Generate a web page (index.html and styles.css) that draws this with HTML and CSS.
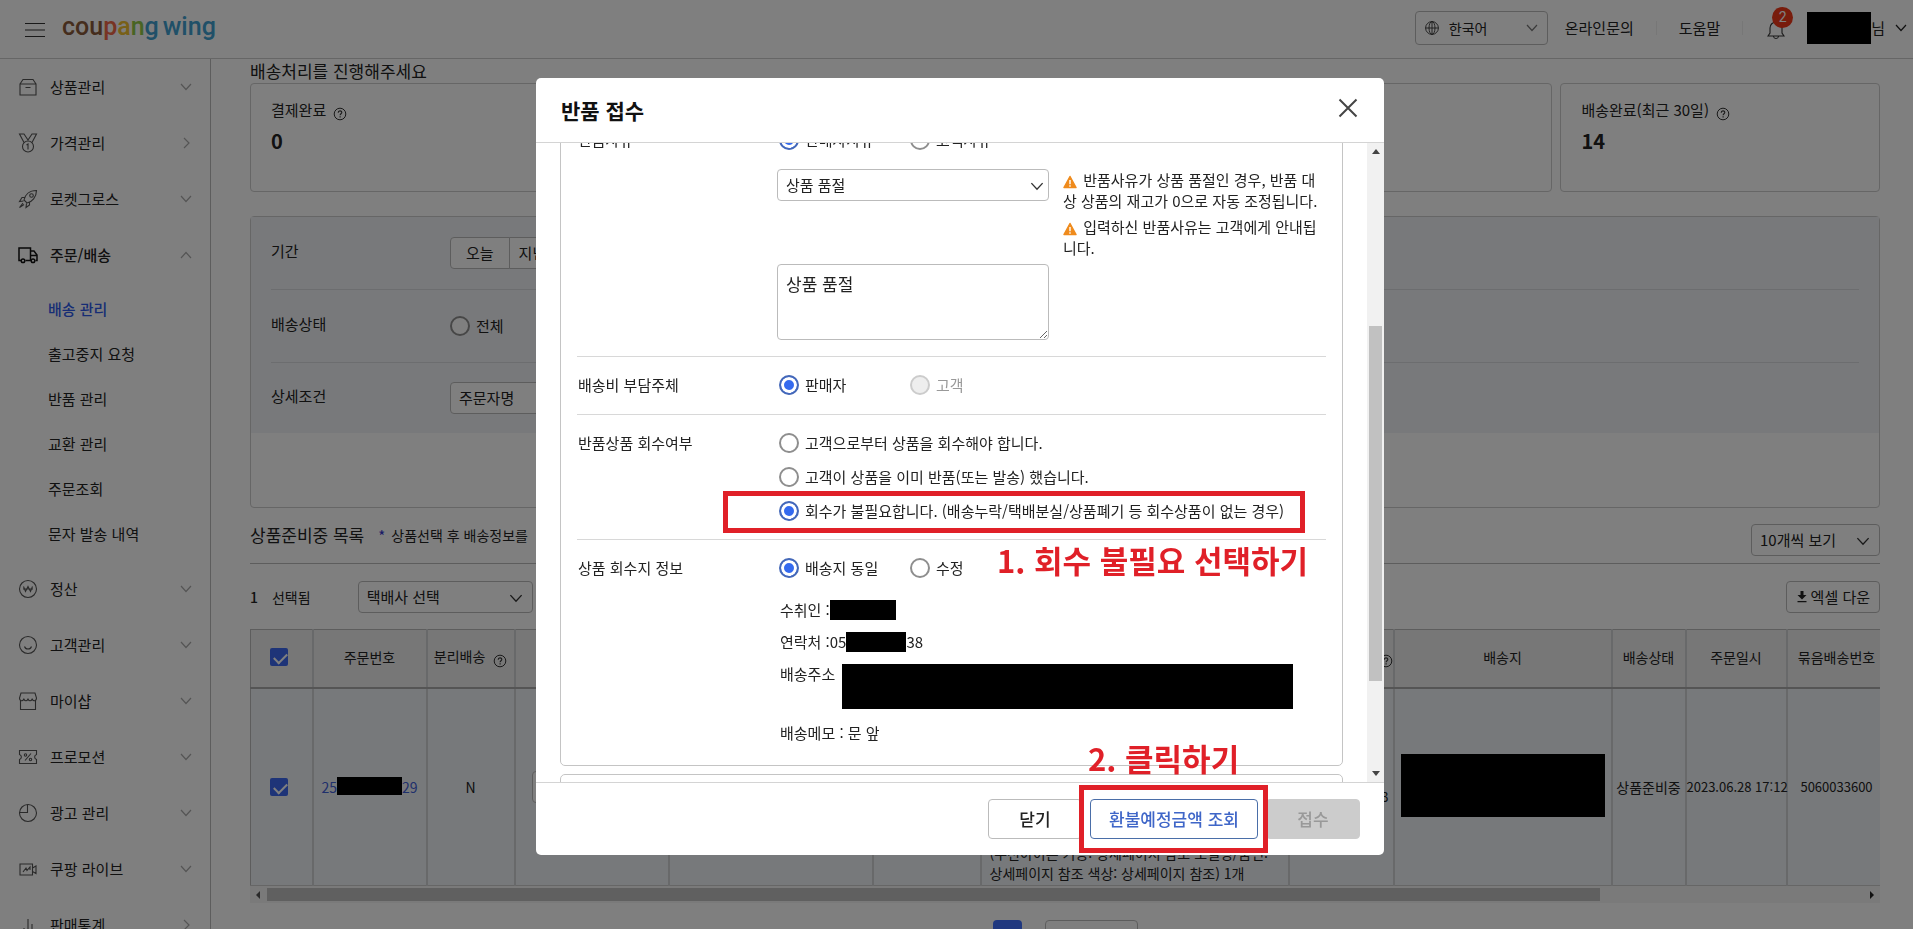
FILE: index.html
```html
<!DOCTYPE html>
<html lang="ko">
<head>
<meta charset="utf-8">
<title>coupang wing</title>
<link rel="stylesheet" href="styles.css">
</head>
<body>
<svg width="0" height="0" class="defs" aria-hidden="true">
  <symbol id="down" viewBox="0 0 12 8"><path d="M1 1l5 5.500L11 1" fill="none" stroke="currentColor" stroke-width="1.2"/></symbol>
  <symbol id="up" viewBox="0 0 12 8"><path d="M1 7l5-5.500L11 7" fill="none" stroke="currentColor" stroke-width="1.2"/></symbol>
  <symbol id="right" viewBox="0 0 12 12"><path d="M4 1l5 5-5 5" fill="none" stroke="currentColor" stroke-width="1.2"/></symbol>
  <symbol id="help" viewBox="0 0 14 14"><circle cx="7" cy="7" r="5.800" fill="none" stroke="currentColor"/><path d="M5.200 5.700c0-2.400 3.600-2.400 3.600-.200 0 1.200-1.700 1.300-1.700 2.700M7.100 9.300v1.100" fill="none" stroke="currentColor" stroke-width="1.1"/></symbol>
  <symbol id="warn" viewBox="0 0 14 14"><path d="M7 1.500L13 12.500H1z" fill="#ef8b1d" stroke="#ef8b1d" stroke-width="1.500" stroke-linejoin="round"/><path d="M7 5v4.200M7 10.300v1.400" stroke="#fff" stroke-width="1.400"/></symbol>
</svg>

<header class="topbar">
  <button class="icon-btn menu-btn" aria-label="메뉴"><svg width="20" height="14" viewBox="0 0 20 14"><path d="M0 .5h20M0 7h20M0 13.500h20" stroke="#333" stroke-width="1"/></svg></button>
  <a class="logo" href="#"><span><span class="c-brown">cou</span><span class="c-red">p</span><span class="c-yellow">a</span><span class="c-green">n</span><span class="c-blue">g</span></span> <span class="c-blue">wing</span></a>
  <div class="select lang">
    <svg class="globe" width="14" height="14" viewBox="0 0 14 14" fill="none" stroke="#333" stroke-width=".9"><circle cx="7" cy="7" r="6.400"/><ellipse cx="7" cy="7" rx="3" ry="6.400"/><path d="M.6 7h12.800M7 .6v12.800"/></svg>
    <select aria-label="언어"><option>한국어</option></select>
    <svg class="caret" width="12" height="8"><use href="#down"/></svg>
  </div>
  <a class="top-link" href="#">온라인문의</a>
  <span class="sep"></span>
  <a class="top-link" href="#">도움말</a>
  <span class="sep"></span>
  <button class="icon-btn bell" aria-label="알림"><svg width="18" height="20" viewBox="0 0 18 20" fill="none" stroke="#333" stroke-width="1.100"><path d="M1 16h16l-2-3V8a6 6 0 0 0-12 0v5zM6.500 16.500c.5 2.600 4.500 2.600 5 0M9 2V.5"/></svg><span class="badge">2</span></button>
  <button class="icon-btn user"><span class="redact user-name"></span>님<svg class="user-caret" width="12" height="8"><use href="#down"/></svg></button>
</header>

<div class="shell">
  <nav class="side">
    <a class="item" href="#"><svg class="ico" viewBox="0 0 20 20"><path d="M2 7h16v11H2zM2 7l3-4.500h10L18 7M7.500 10.500h5"/></svg><span>상품관리</span><svg class="arrow" width="12" height="8"><use href="#down"/></svg></a>
    <a class="item" href="#"><svg class="ico" viewBox="0 0 20 20"><circle cx="10" cy="13.500" r="5.500"/><path d="M6 9.500L1.500 1H6l4 6 4-6h4.500L14 9.500M8.500 12l1.500-1v5.500"/></svg><span>가격관리</span><svg class="arrow" width="12" height="12"><use href="#right"/></svg></a>
    <a class="item" href="#"><svg class="ico" viewBox="0 0 20 20"><path d="M6 11C7 6 11 1.500 18.500 1.500 18.500 8 14 13 9 14zM7 8.500H4l-2.500 4 4-.5M11.500 13v3L8 18.500l.5-4M5 14l-3.500 4.500L6 15.500"/><circle cx="13.500" cy="6.500" r="1.800"/></svg><span>로켓그로스</span><svg class="arrow" width="12" height="8"><use href="#down"/></svg></a>
    <a class="item active" href="#"><svg class="ico" viewBox="0 0 20 20"><path d="M3 15.500H1V3h11.500v12.500H7.500M12.500 6H16l3 4v5.500h-1.500M12.500 10.500H19"/><circle cx="5" cy="15.800" r="1.800"/><circle cx="15" cy="15.800" r="1.800"/></svg><span>주문/배송</span><svg class="arrow" width="12" height="8"><use href="#up"/></svg></a>
    <div class="sub">
      <a class="current" href="#">배송 관리</a>
      <a href="#">출고중지 요청</a>
      <a href="#">반품 관리</a>
      <a href="#">교환 관리</a>
      <a href="#">주문조회</a>
      <a href="#">문자 발송 내역</a>
    </div>
    <a class="item" href="#"><svg class="ico" viewBox="0 0 20 20"><circle cx="10" cy="10" r="8.500"/><path d="M5.500 7.500l2 5 2.500-5 2.500 5 2-5M5 10h10"/></svg><span>정산</span><svg class="arrow" width="12" height="8"><use href="#down"/></svg></a>
    <a class="item" href="#"><svg class="ico" viewBox="0 0 20 20"><circle cx="10" cy="10" r="8.500"/><path d="M6.500 11.500c1 3.300 6 3.300 7 0"/></svg><span>고객관리</span><svg class="arrow" width="12" height="8"><use href="#down"/></svg></a>
    <a class="item" href="#"><svg class="ico" viewBox="0 0 20 20"><path d="M2.500 9.500v9h15v-9M3 2h14l1.500 5c0 3.500-4 3.500-4.300.5-.5 3-3.800 3-4.200 0-.4 3-3.700 3-4.200 0C5.500 10.500 1.500 10.500 1.500 7z"/></svg><span>마이샵</span><svg class="arrow" width="12" height="8"><use href="#down"/></svg></a>
    <a class="item" href="#"><svg class="ico" viewBox="0 0 20 20"><path d="M1.500 3.500h17v4c-2.500 1-2.500 4 0 5v4h-17v-4c2.500-1 2.500-4 0-5zM13 6.500l-6 7"/><circle cx="7.500" cy="8" r="1.200"/><circle cx="12.500" cy="12.500" r="1.200"/></svg><span>프로모션</span><svg class="arrow" width="12" height="8"><use href="#down"/></svg></a>
    <a class="item" href="#"><svg class="ico" viewBox="0 0 20 20"><circle cx="10" cy="10" r="8.500"/><path d="M9.500 1.500v8h-8"/></svg><span>광고 관리</span><svg class="arrow" width="12" height="8"><use href="#down"/></svg></a>
    <a class="item" href="#"><svg class="ico" viewBox="0 0 20 20"><path d="M2 5h12.500v11H2zM14.500 9l3.500-2v7.500l-3.500-2M5 13l3-4 1 2.500L12 8v3"/></svg><span>쿠팡 라이브</span><svg class="arrow" width="12" height="8"><use href="#down"/></svg></a>
    <a class="item" href="#"><svg class="ico" viewBox="0 0 20 20"><path d="M6 18v-5M10 18V4M14 18V9"/></svg><span>판매통계</span><svg class="arrow" width="12" height="12"><use href="#right"/></svg></a>
  </nav>

  <main class="main">
    <h2 class="notice">배송처리를 진행해주세요</h2>
    <section class="cards">
      <div class="card"><div class="card-label">결제완료 <svg class="help" width="14" height="14"><use href="#help"/></svg></div><strong>0</strong></div>
      <div class="card"></div>
      <div class="card"></div>
      <div class="card"></div>
      <div class="card"><div class="card-label">배송완료(최근 30일) <svg class="help" width="14" height="14"><use href="#help"/></svg></div><strong>14</strong></div>
    </section>

    <section class="search">
      <div class="criteria">
        <div class="crit"><span class="crit-name">기간</span><div class="btn-group"><button>오늘</button><button>지난주</button></div></div>
        <div class="crit"><span class="crit-name">배송상태</span><label class="radio"><input type="radio" name="status"><span>전체</span></label></div>
        <div class="crit"><span class="crit-name">상세조건</span><div class="select cond"><select aria-label="상세조건"><option>주문자명</option></select></div></div>
      </div>
      <div class="search-foot"></div>
    </section>

    <div class="list-head">
      <h3>상품준비중 목록</h3><span class="star">*</span><p>상품선택 후 배송정보를</p>
      <div class="select per-page"><select aria-label="표시 개수"><option>10개씩 보기</option></select><svg class="caret" width="14" height="9"><use href="#down"/></svg></div>
    </div>
    <div class="tools">
      <b>1</b><span class="picked">선택됨</span>
      <div class="select courier"><select aria-label="택배사"><option>택배사 선택</option></select><svg class="caret" width="14" height="9"><use href="#down"/></svg></div>
      <button class="excel"><svg width="10" height="12" viewBox="0 0 10 12"><path d="M3.500 0h3v4h3L5 8.500.5 4h3zM.5 10h9v1.300h-9z" fill="#222"/></svg>엑셀 다운</button>
    </div>

    <div class="table-wrap">
      <table>
        <colgroup><col class="w-check"><col class="w-order"><col class="w-split"><col class="w-courier"><col class="w-invoice"><col class="w-date"><col class="w-item"><col class="w-buyer"><col class="w-addr"><col class="w-state"><col class="w-time"><col class="w-bundle"><col></colgroup>
        <thead><tr>
          <th class="check"><input type="checkbox" checked aria-label="전체 선택"></th><th>주문번호</th><th>분리배송 <svg class="help" width="14" height="14"><use href="#help"/></svg></th><th></th><th></th><th></th><th></th><th class="end"><svg class="help" width="14" height="14"><use href="#help"/></svg></th><th>배송지</th><th>배송상태</th><th>주문일시</th><th>묶음배송번호</th><th></th>
        </tr></thead>
        <tbody><tr>
          <td class="check"><input type="checkbox" checked aria-label="주문 선택"></td>
          <td><a class="order" href="#">25<span class="redact order-no"></span>29</a></td>
          <td>N</td>
          <td><div class="select row-courier"><select aria-label="배송 택배사"><option></option></select></div></td>
          <td></td><td></td>
          <td class="product">(무선아이론 기종: 상세페이지 참조 모델명/품번: 상세페이지 참조 색상: 상세페이지 참조) 1개</td>
          <td class="end num buyer">3</td>
          <td><span class="redact address"></span></td>
          <td>상품준비중</td><td class="num">2023.06.28 17:12</td><td class="num">5060033600</td><td></td>
        </tr></tbody>
      </table>
    </div>
    <div class="hscroll"><svg width="6" height="8" viewBox="0 0 6 8"><path d="M5 0v8L1 4z" fill="#555"/></svg><div class="hrail"><div class="hthumb"></div></div><svg width="6" height="8" viewBox="0 0 6 8"><path d="M1 0v8l4-4z" fill="#222"/></svg></div>
    <div class="pager"><button class="page-now" aria-label="1 페이지"></button><div class="select page-size"><select aria-label="페이지"><option></option></select></div></div>
  </main>
</div>

<div class="overlay">
  <section class="modal" role="dialog" aria-labelledby="modal-title">
    <header class="modal-head">
      <h1 id="modal-title">반품 접수</h1>
      <button class="icon-btn" aria-label="닫기"><svg width="20" height="20" viewBox="0 0 20 20"><path d="M1.500 1.500l17 17M18.500 1.500l-17 17" stroke="#444" stroke-width="2"/></svg></button>
    </header>
    <div class="modal-body">
      <form class="scroll-area">
        <div class="panel first">
          <div class="row row-reason">
            <span class="name">반품사유</span>
            <div class="field">
              <div class="options"><label class="radio"><input type="radio" name="why" checked><span>판매자사유</span></label><label class="radio"><input type="radio" name="why"><span>고객사유</span></label></div>
              <div class="reason">
                <div class="select"><select aria-label="반품사유"><option>상품 품절</option></select><svg class="caret" width="14" height="9"><use href="#down"/></svg></div>
                <div class="warnings">
                  <p><svg width="14" height="14"><use href="#warn"/></svg> 반품사유가 상품 품절인 경우, 반품 대상 상품의 재고가 0으로 자동 조정됩니다.</p>
                  <p><svg width="14" height="14"><use href="#warn"/></svg> 입력하신 반품사유는 고객에게 안내됩니다.</p>
                </div>
                <textarea aria-label="상세 사유">상품 품절</textarea>
              </div>
            </div>
          </div>
          <div class="row row-fee">
            <span class="name">배송비 부담주체</span>
            <div class="options"><label class="radio"><input type="radio" name="fee" checked><span>판매자</span></label><label class="radio off"><input type="radio" name="fee" disabled><span>고객</span></label></div>
          </div>
          <div class="row">
            <span class="name">반품상품 회수여부</span>
            <div class="stack">
              <label class="radio"><input type="radio" name="pick"><span>고객으로부터 상품을 회수해야 합니다.</span></label>
              <label class="radio"><input type="radio" name="pick"><span>고객이 상품을 이미 반품(또는 발송) 했습니다.</span></label>
              <label class="radio"><input type="radio" name="pick" checked><span>회수가 불필요합니다. (배송누락/택배분실/상품폐기 등 회수상품이 없는 경우)</span></label>
            </div>
          </div>
          <div class="row last">
            <span class="name">상품 회수지 정보</span>
            <div class="field">
              <div class="options"><label class="radio"><input type="radio" name="place" checked><span>배송지 동일</span></label><label class="radio"><input type="radio" name="place"><span>수정</span></label></div>
              <div class="info">
                <p>수취인 :<span class="redact who"></span></p>
                <p>연락처 :05<span class="redact phone"></span>38</p>
                <p>배송주소<span class="redact where"></span></p>
                <p>배송메모 : 문 앞</p>
              </div>
            </div>
          </div>
        </div>
        <div class="panel next"></div>
      </form>
      <div class="vscroll"><svg width="8" height="5" viewBox="0 0 8 5"><path d="M0 5h8L4 0z" fill="#444"/></svg><div class="vrail"><div class="vthumb"></div></div><svg width="8" height="5" viewBox="0 0 8 5"><path d="M0 0h8L4 5z" fill="#444"/></svg></div>
    </div>
    <footer class="modal-foot">
      <button class="btn">닫기</button>
      <button class="btn query">환불예정금액 조회</button>
      <button class="btn" disabled>접수</button>
    </footer>
    <div class="mark mark-one"></div>
    <p class="tip tip-one">1. 회수 불필요 선택하기</p>
    <div class="mark mark-two"></div>
    <p class="tip tip-two">2. 클릭하기</p>
  </section>
</div>
</body>
</html>
```
FILE: styles.css
```css
* { box-sizing: border-box; }
body, h1, h2, h3, p { margin: 0; }
body {
  height: 100vh;
  overflow: hidden;
  background: #fff;
  color: #222;
  font: 15px/20px "Noto Sans CJK KR", sans-serif;
}
a { color: inherit; text-decoration: none; }
button, select, textarea, input { font: inherit; color: inherit; margin: 0; }
button { cursor: pointer; padding: 0; }
svg { flex: none; }
.defs { position: absolute; }
.redact { display: inline-block; background: #000; flex: none; }
.icon-btn { background: none; border: 0; display: flex; align-items: center; }

/* Form controls */
.select { position: relative; height: 32px; }
.select select {
  appearance: none;
  width: 100%;
  height: 100%;
  padding: 0 8px;
  border: 1px solid #bbb;
  border-radius: 4px;
  background: #fff;
}
.caret { position: absolute; right: 5px; top: 13px; color: #333; pointer-events: none; }
.radio { display: flex; align-items: center; gap: 6px; height: 20px; white-space: nowrap; }
.radio input {
  appearance: none;
  flex: none;
  width: 20px;
  height: 20px;
  border: 2px solid #8e8e8e;
  border-radius: 50%;
  background: #fff;
}
.radio input:checked { border-color: #4468b8; background: #346aef; box-shadow: inset 0 0 0 3px #fff; }
.radio input:disabled { border-color: #ccc; background: #eee; }
.off { color: #999; }
input[type="checkbox"] {
  appearance: none;
  display: block;
  width: 18px;
  height: 18px;
  margin: 0 auto;
  border-radius: 2px;
  background: #3c68f0;
}
input[type="checkbox"]::before {
  content: "";
  display: block;
  width: 11px;
  height: 6px;
  margin: 5px 0 0 4px;
  border: solid #fff;
  border-width: 0 0 2px 2px;
  transform: rotate(-45deg);
}

/* Top bar */
.topbar {
  display: flex;
  align-items: center;
  height: 59px;
  padding: 0 6px 3px 25px;
  border-bottom: 1px solid #ccc;
}
.menu-btn { margin-top: 4px; }
.logo { display: flex; gap: 4px; margin: 0 auto 2px 17px; font: 500 25px/30px Roboto, sans-serif; }
.c-brown { color: #8a5a3a; }
.c-red { color: #f06848; }
.c-yellow { color: #f0c030; }
.c-green { color: #90c848; }
.c-blue { color: #40a0d0; }
.lang { width: 133px; height: 34px; margin-right: 17px; font-size: 14px; }
.lang select { padding-left: 33px; }
.lang .caret { right: 10px; color: #777; }
.globe { position: absolute; left: 10px; top: 10px; pointer-events: none; }
.sep { width: 1px; height: 14px; margin: 0 22px; background: #eee; }
.bell { position: relative; margin: 4px 22px 0 2px; }
.badge {
  position: absolute;
  left: 5px;
  top: -13px;
  width: 21px;
  border-radius: 11px;
  background: #f03818;
  color: #fff;
  font: 14px/21px Roboto, sans-serif;
  text-align: center;
}
.user-name { width: 64px; height: 32px; }
.user-caret { margin-left: 10px; }

/* Sidebar */
.shell { display: flex; height: calc(100vh - 59px); }
.side { flex: none; width: 211px; border-right: 1px solid #bbb; overflow: hidden; }
.item { display: flex; align-items: center; gap: 12px; height: 56px; padding: 0 18px; }
.ico { width: 20px; height: 20px; fill: none; stroke: #555; stroke-width: 1.1; }
.arrow { margin-left: auto; color: #aaa; }
.active { font-weight: 500; }
.active .ico { stroke: #111; stroke-width: 1.5; }
.sub { padding: 3px 0 5px; }
.sub a { display: block; padding-left: 48px; line-height: 45px; }
.sub .current { color: #2f5bea; font-weight: 500; }

/* Main column */
.main { flex: 1; min-width: 0; padding: 0 33px 0 39px; }
.notice { font-size: 17px; line-height: 24px; font-weight: 400; }
.cards { display: grid; grid-template-columns: repeat(5, 1fr); gap: 8px; }
.card { height: 109px; padding: 15px 20px; border: 1px solid #ccc; border-radius: 4px; }
.card-label { display: flex; align-items: center; gap: 7px; line-height: 22px; }
.card-label .help { margin-top: 8px; }
.card strong { display: block; margin-top: 8px; font-size: 20px; line-height: 24px; }
.help { color: #333; }
.search { margin-top: 24px; border: 1px solid #ccc; border-radius: 4px; }
.criteria { padding: 0 20px; background: #f1f3f7; }
.crit { display: flex; align-items: center; height: 73px; border-bottom: 1px solid #d8dade; }
.crit:last-child { height: 70px; border-bottom: 0; }
.crit-name { width: 179px; padding-bottom: 4px; }
.btn-group { display: flex; }
.btn-group button { height: 32px; padding: 0 15px; border: 1px solid #bbb; background: #fff; border-radius: 4px 0 0 4px; }
.btn-group button + button { margin-left: -1px; padding: 0 9px; border-radius: 0 4px 4px 0; }
.cond { width: 180px; }
.search-foot { height: 74px; }

.list-head { display: flex; align-items: flex-start; padding: 16px 0 7px; border-bottom: 1px solid #bbb; }
.list-head h3 { font-size: 17px; line-height: 22px; font-weight: 400; }
.star { margin: 0 6px 0 14px; color: #33c; line-height: 24px; }
.list-head p { font-size: 14px; line-height: 23px; }
.per-page { width: 129px; margin-left: auto; }
.tools { display: flex; align-items: center; padding: 17px 0 16px; font-size: 14px; }
.tools b { font-weight: 500; }
.picked { margin: 0 47px 0 14px; }
.courier { width: 175px; font-size: 15px; }
.per-page .caret, .courier .caret { right: 10px; }
.excel {
  display: flex;
  align-items: center;
  gap: 4px;
  height: 32px;
  margin-left: auto;
  padding: 0 9px 0 10px;
  border: 1px solid #bbb;
  border-radius: 4px;
  background: #fff;
  font-size: 15px;
}

.table-wrap { overflow: hidden; }
table { width: 1952px; table-layout: fixed; border-collapse: collapse; font-size: 14px; line-height: 20px; }
th, td { padding: 0; border-right: 2px solid #d0d2d5; text-align: center; }
th:first-child, td:first-child { border-left: 1px solid #bbb; }
.check { padding-right: 4px; }
th { height: 58px; padding-bottom: 2px; background: #eee; font-weight: 400; border-top: 1px solid #bbb; border-bottom: 2px solid #aaa; }
th .help { margin: 6px 0 0 4px; vertical-align: middle; }
td { height: 198px; background: #eff2f6; border-bottom: 1px solid #ccc; }
.end { text-align: right; }
.num { font-size: 13px; white-space: nowrap; }
.buyer { padding: 20px 4px 0 0; }
.order { display: flex; justify-content: center; color: #3f60d8; }
.order-no { width: 65px; height: 18px; }
.address { width: 204px; height: 63px; margin-top: 2px; }
.row-courier { margin: 0 16px; }
.product { padding: 0 8px 2px; text-align: left; vertical-align: bottom; }
.w-check { width: 62px; } .w-order { width: 114px; } .w-split { width: 88px; } .w-courier { width: 154px; }
.w-invoice { width: 204px; } .w-date { width: 108px; } .w-item { width: 308px; } .w-buyer { width: 105px; }
.w-addr { width: 218px; } .w-state { width: 74px; } .w-time { width: 101px; } .w-bundle { width: 100px; }
.hscroll { display: flex; align-items: center; gap: 6px; height: 17px; padding: 0 5px; background: #f4f4f4; }
.hrail { flex: 1; }
.hthumb { width: 83.5%; height: 13px; background: #c1c1c1; }
.pager { display: flex; justify-content: center; gap: 23px; padding: 17px 0 0; }
.page-now { width: 29px; height: 32px; border: 0; border-radius: 4px; background: #4070ff; }
.page-size { width: 93px; }

/* Dialog */
.overlay {
  position: fixed;
  inset: 0;
  display: flex;
  align-items: center;
  justify-content: center;
  padding: 4px 0 0 7px;
  background: rgba(0, 0, 0, .5);
}
.modal {
  position: relative;
  display: flex;
  flex-direction: column;
  width: 848px;
  max-width: 100%;
  height: calc(100vh - 152px);
  border-radius: 5px;
  background: #fff;
}
.modal-head {
  display: flex;
  align-items: center;
  justify-content: space-between;
  height: 65px;
  padding: 0 26px 0 25px;
  border-bottom: 1px solid #d4d4d4;
}
.modal-head h1 { font-size: 21px; line-height: 30px; font-weight: 700; color: #111; }
.modal-head .icon-btn { margin-bottom: 4px; }
.modal-body { flex: 1; min-height: 0; display: flex; overflow: hidden; }
.scroll-area { flex: 1; min-width: 0; padding: 0 24px; }
.panel { border: 1px solid #c4c4c4; border-radius: 5px; padding: 0 16px; }
.first { margin-top: -32px; }
.next { margin-top: 8px; height: 80px; }
.row { display: flex; padding: 18px 0; border-bottom: 1px solid #d8d8d8; }
.row-reason { padding-bottom: 16px; }
.row-fee { padding-bottom: 19px; }
.last { border: 0; padding-bottom: 22px; }
.name { flex: none; width: 200px; padding-left: 1px; }
.options { display: grid; grid-template-columns: 129px auto; justify-content: start; column-gap: 2px; padding-left: 2px; }
.reason { display: grid; grid-template-columns: 272px 258px; gap: 6px 14px; margin-top: 19px; }
.warnings { display: grid; gap: 5px; line-height: 21px; }
.warnings svg { vertical-align: -3px; margin-right: 2px; }
textarea {
  height: 76px;
  padding: 8px;
  border: 1px solid #bbb;
  border-radius: 4px;
  font-size: 17px;
  line-height: 22px;
  resize: both;
}
.stack { display: grid; gap: 14px; padding-left: 2px; }
.info { display: grid; gap: 12px; margin-top: 22px; padding-left: 3px; }
.info p { display: flex; white-space: pre; }
.who { width: 66px; height: 20px; }
.phone { width: 60px; height: 20px; }
.where { width: 451px; height: 45px; margin: 0 0 2px 7px; }
.vscroll { display: flex; flex-direction: column; align-items: center; gap: 6px; width: 17px; padding: 6px 0; background: #f1f1f1; }
.vrail { flex: 1; width: 13px; padding-top: 166px; }
.vthumb { width: 13px; height: 355px; background: #c1c1c1; }
.modal-foot {
  display: flex;
  gap: 8px;
  justify-content: flex-end;
  height: 73px;
  padding: 16px 24px;
  border-top: 1px solid #d4d4d4;
}
.btn {
  width: 94px;
  height: 40px;
  border: 1px solid #bbb;
  border-radius: 4px;
  background: #fff;
  font-size: 17px;
  font-weight: 500;
}
.query { width: 168px; border-color: #4a6ea8; color: #3f66c8; }
.btn:disabled { border-color: #ccc; background: #ccc; color: #999; }

/* Step marks drawn over the dialog */
.mark { position: absolute; border: 5px solid #e02028; pointer-events: none; }
.mark-one { left: 187px; top: 413px; width: 582px; height: 42px; }
.mark-two { left: 543px; top: 707px; width: 189px; height: 68px; }
.tip { position: absolute; color: #e02028; font-size: 31px; line-height: 40px; font-weight: 700; white-space: nowrap; }
.tip-one { left: 461px; top: 462px; }
.tip-two { left: 552px; top: 660px; }
```
